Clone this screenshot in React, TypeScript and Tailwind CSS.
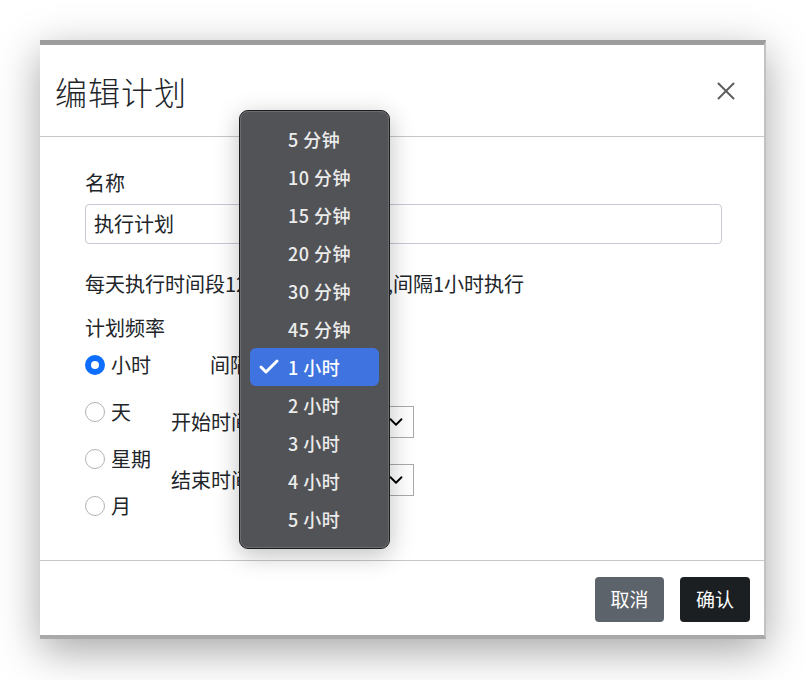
import { Check, ChevronDown, X } from "lucide-react";

const font = { fontFamily: '"Noto Sans CJK SC", sans-serif' };

const options = [
  "5 分钟",
  "10 分钟",
  "15 分钟",
  "20 分钟",
  "30 分钟",
  "45 分钟",
  "1 小时",
  "2 小时",
  "3 小时",
  "4 小时",
  "5 小时",
];

function Radio({ label, checked }: { label: string; checked?: boolean }) {
  return (
    <div className="flex items-center h-6 gap-[6px]">
      {checked ? (
        <span className="w-[20px] h-[20px] rounded-full border-[6px] border-[#0d6efd] bg-white" />
      ) : (
        <span className="w-[20px] h-[20px] rounded-full border border-[#b3b3b3] bg-white" />
      )}
      <span className="text-[20px] text-[#212529]">{label}</span>
    </div>
  );
}

function TimeSelect() {
  return (
    <div className="w-[159px] h-[32px] border border-[#a9a9a9] flex items-center justify-end pr-[6px]">
      <ChevronDown size={22} strokeWidth={2} className="text-black" />
    </div>
  );
}

export default function App() {
  return (
    <div className="relative w-[806px] h-[680px] bg-white overflow-hidden pt-[40px] pl-[40px]" style={font}>
      {/* 弹窗 */}
      <div className="w-[726px] bg-white border-t-[5px] border-t-[#9d9d9d] border-r-2 border-r-[#c2c2c2] border-b-[4px] border-b-[#a9a9a9] shadow-[0_12px_40px_rgba(0,0,0,0.35)]">
        <div className="h-[92px] flex items-center justify-between px-[15px] border-b border-[#c8c8c8]">
          <h1 className="text-[32px] font-light text-[#212529] tracking-[1px]">编辑计划</h1>
          <X size={30} strokeWidth={1.6} className="text-[#5f5f5f] mr-[8px]" />
        </div>

        <div className="px-[45px] pt-[34px] pb-[42px] text-[#212529]">
          <div className="text-[20px] leading-6">名称</div>
          <div className="mt-[9px] w-[637px] h-[40px] border border-[#c5cad3] rounded-[4px] flex items-center px-[8px] text-[20px]">
            执行计划
          </div>
          <div className="mt-[28px] text-[20px] leading-6">每天执行时间段12:00:00-18:00:00,间隔1小时执行</div>
          <div className="mt-[20px] text-[20px] leading-6">计划频率</div>

          <div className="mt-[13px] flex">
            <div className="w-[86px] flex flex-col gap-[23px]">
              <Radio label="小时" checked />
              <Radio label="天" />
              <Radio label="星期" />
              <Radio label="月" />
            </div>
            <div className="flex flex-col">
              <div className="flex items-center h-6">
                <span className="w-[79px] text-right text-[20px]">间隔</span>
              </div>
              <div className="mt-[29px] flex items-center gap-[4px]">
                <span className="w-[80px] text-[20px]">开始时间</span>
                <TimeSelect />
              </div>
              <div className="mt-[26px] flex items-center gap-[4px]">
                <span className="w-[80px] text-[20px]">结束时间</span>
                <TimeSelect />
              </div>
            </div>
          </div>
        </div>

        <div className="border-t border-[#c8c8c8] flex justify-end gap-[16px] pt-[16px] pb-[13px] pr-[14px]">
          <button className="w-[69px] h-[45px] rounded-[4px] bg-[#5c636a] text-white text-[19px]">取消</button>
          <button className="w-[70px] h-[45px] rounded-[4px] bg-[#1b1f22] text-white text-[19px]">确认</button>
        </div>
      </div>

      {/* 下拉菜单 */}
      <div className="absolute left-[239px] top-[110px] w-[151px] rounded-[9px] border border-[#1c1c1e] bg-[#525357] shadow-[0_6px_24px_rgba(0,0,0,0.25)]">
        <div className="rounded-[8px] border border-[#6b6c70] px-[9px] pt-[8px] pb-[9px]">
          {options.map((o) => {
            const selected = o === "1 小时";
            return (
              <div
                key={o}
                className={
                  selected
                    ? "h-[38px] rounded-[6px] bg-[#3f74e0] flex items-center text-white"
                    : "h-[38px] flex items-center text-[#ececec]"
                }
              >
                <span className="w-[38px] flex justify-center">
                  {selected && <Check size={24} strokeWidth={3} className="text-white" />}
                </span>
                <span className="text-[18px] font-medium tracking-[0.5px]">{o}</span>
              </div>
            );
          })}
        </div>
      </div>
    </div>
  );
}
